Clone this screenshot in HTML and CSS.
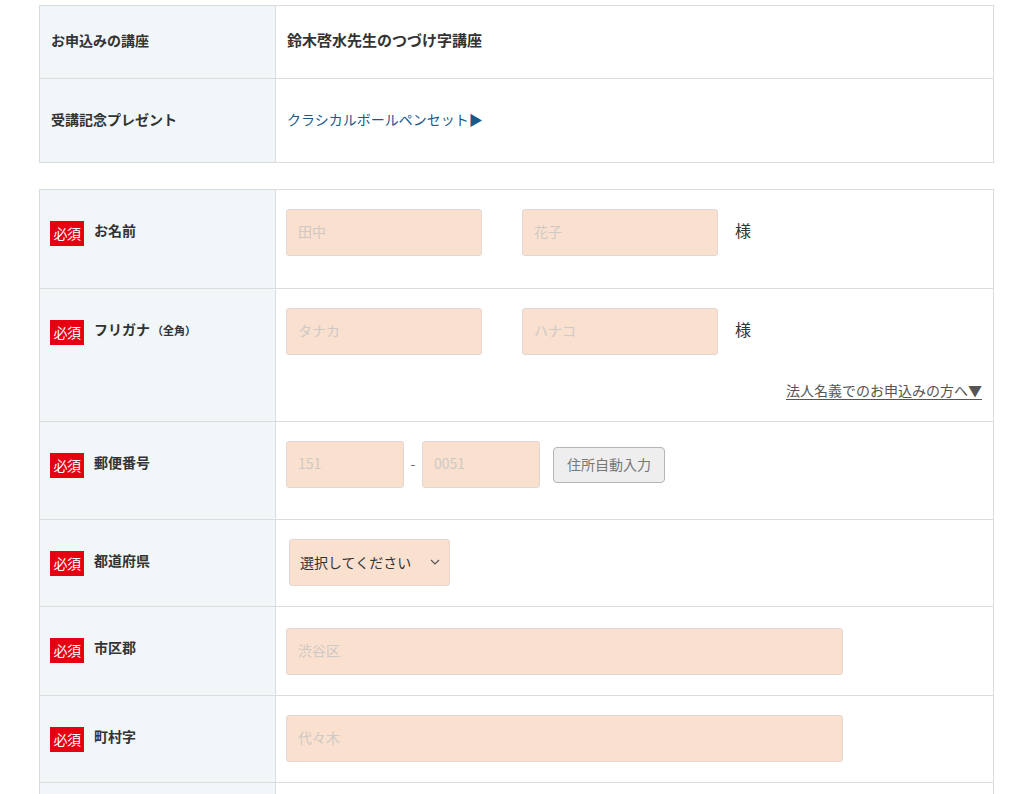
FILE: index.html
```html
<!DOCTYPE html>
<html lang="ja">
<head>
<meta charset="utf-8">
<title>お申込みフォーム</title>
<link rel="stylesheet" href="styles.css">
</head>
<body>
<div class="page">
  <div class="table summary">
    <div class="row row-course">
      <div class="label">お申込みの講座</div>
      <div class="value value-strong">鈴木啓水先生のつづけ字講座</div>
    </div>
    <div class="row row-present">
      <div class="label">受講記念プレゼント</div>
      <div class="value"><a class="present-link" href="#">クラシカルボールペンセット▶</a></div>
    </div>
  </div>

  <div class="table form">
    <div class="row">
      <div class="label"><span class="badge">必須</span><span class="label-text">お名前</span></div>
      <div class="value pad-name">
        <div class="inline">
          <input class="input input-half" type="text" placeholder="田中">
          <input class="input input-half" type="text" placeholder="花子">
          <span class="sama">様</span>
        </div>
      </div>
    </div>
    <div class="row">
      <div class="label"><span class="badge">必須</span><span class="label-text">フリガナ<small class="note">（全角）</small></span></div>
      <div class="value pad-kana">
        <div class="inline">
          <input class="input input-half" type="text" placeholder="タナカ">
          <input class="input input-half" type="text" placeholder="ハナコ">
          <span class="sama">様</span>
        </div>
        <div class="corp-line"><a class="corp-link" href="#">法人名義でのお申込みの方へ▼</a></div>
      </div>
    </div>
    <div class="row">
      <div class="label"><span class="badge">必須</span><span class="label-text">郵便番号</span></div>
      <div class="value pad-zip">
        <div class="inline zip">
          <input class="input input-zip" type="text" placeholder="151">
          <span class="dash">-</span>
          <input class="input input-zip" type="text" placeholder="0051">
          <button class="auto-btn" type="button">住所自動入力</button>
        </div>
      </div>
    </div>
    <div class="row">
      <div class="label"><span class="badge">必須</span><span class="label-text">都道府県</span></div>
      <div class="value pad-std">
        <div class="select">
          <span class="select-text">選択してください</span>
          <svg class="chevron" width="10" height="6" viewBox="0 0 10 6"><path d="M1 1 L5 5 L9 1" fill="none" stroke="#555" stroke-width="1.2"/></svg>
        </div>
      </div>
    </div>
    <div class="row">
      <div class="label"><span class="badge">必須</span><span class="label-text">市区郡</span></div>
      <div class="value pad-city">
        <input class="input input-long" type="text" placeholder="渋谷区">
      </div>
    </div>
    <div class="row">
      <div class="label"><span class="badge">必須</span><span class="label-text">町村字</span></div>
      <div class="value pad-std">
        <input class="input input-long" type="text" placeholder="代々木">
      </div>
    </div>
    <div class="row row-next">
      <div class="label"></div>
      <div class="value"></div>
    </div>
  </div>
</div>
</body>
</html>
```

FILE: styles.css
```css
* { box-sizing: border-box; }

html, body {
  margin: 0;
  padding: 0;
  background: #fff;
}

body {
  font-family: "Noto Sans CJK JP", "Noto Sans", sans-serif;
  color: #333;
  font-size: 14px;
  line-height: 20px;
}

.page {
  padding: 5px 30px 0 39px;
}

.table {
  width: 955px;
  border: 1px solid #dcdcdc;
  background: #fff;
}

.form {
  margin-top: 26px;
}

.row {
  display: grid;
  grid-template-columns: 236px 1fr;
  border-top: 1px solid #dcdcdc;
}

.row:first-child {
  border-top: none;
}

.label {
  background: #f1f6f9;
  border-right: 1px solid #dcdcdc;
  padding: 0 10px 0 11px;
  font-weight: 700;
  font-size: 14px;
  color: #333;
}

.summary .label {
  display: flex;
  align-items: center;
  padding-bottom: 4px;
}

.summary .value {
  display: flex;
  align-items: center;
  padding: 0 10px 4px 11px;
}

.row-course { height: 72px; }
.row-present { height: 84px; }

.value-strong {
  font-weight: 700;
  font-size: 15px;
}

.present-link {
  color: #1b5a88;
  text-decoration: none;
  font-size: 14px;
}

.form .label {
  display: flex;
  align-items: flex-start;
  padding-top: 31px;
  padding-left: 10px;
  gap: 10px;
}

.badge {
  display: inline-block;
  width: 34px;
  height: 25px;
  line-height: 24px;
  background: #e60012;
  color: #fff;
  font-weight: 400;
  font-size: 14px;
  text-align: center;
  letter-spacing: -0.5px;
}

.label-text {
  line-height: 20px;
  margin-top: -1px;
}

.note {
  font-size: 11px;
  margin-left: 2px;
}

.value {
  padding-left: 10px;
  padding-right: 11px;
}

.pad-name { padding-top: 19px; padding-bottom: 32px; }
.pad-kana { padding-top: 19px; padding-bottom: 21px; }
.pad-zip { padding-top: 19px; padding-bottom: 31px; }
.pad-std { padding-top: 19px; padding-bottom: 20px; }
.pad-city { padding-top: 21px; padding-bottom: 20px; }

.row-next { height: 40px; }

.inline {
  display: flex;
  align-items: center;
}

.input {
  display: block;
  height: 47px;
  background: #fae0cf;
  border: 1px solid #e2d8d2;
  border-radius: 3px;
  padding: 0 11px 4px;
  font-family: inherit;
  font-size: 14px;
  color: #333;
  outline: none;
}

.input::placeholder {
  color: #cfc9c5;
}

.input-half { width: 196px; }
.input-half + .input-half { margin-left: 40px; }

.sama {
  margin-left: 17px;
  font-size: 16px;
  color: #333;
  margin-top: -5px;
}

.corp-line {
  margin-top: 25px;
  text-align: right;
  line-height: 20px;
}

.corp-link {
  color: #555;
  font-size: 14px;
  text-decoration: underline;
  text-underline-offset: 3px;
}

.input-zip { width: 118px; }

.dash {
  width: 18px;
  text-align: center;
  color: #666;
  font-size: 14px;
  margin-top: -3px;
}

.auto-btn {
  margin-left: 13px;
  height: 36px;
  padding: 0 13px 2px;
  background: #eee;
  border: 1px solid #b5b5b5;
  border-radius: 4px;
  color: #777;
  font-family: inherit;
  font-size: 14px;
  line-height: 32px;
}

.select {
  margin-left: 3px;
  width: 161px;
  height: 47px;
  background: #fae0cf;
  border: 1px solid #e2d8d2;
  border-radius: 3px;
  display: flex;
  align-items: center;
  justify-content: space-between;
  padding: 0 9px 2px 10px;
}

.select-text {
  font-size: 14px;
  color: #333;
}

.chevron {
  display: block;
}

.input-long { width: 557px; }
```
